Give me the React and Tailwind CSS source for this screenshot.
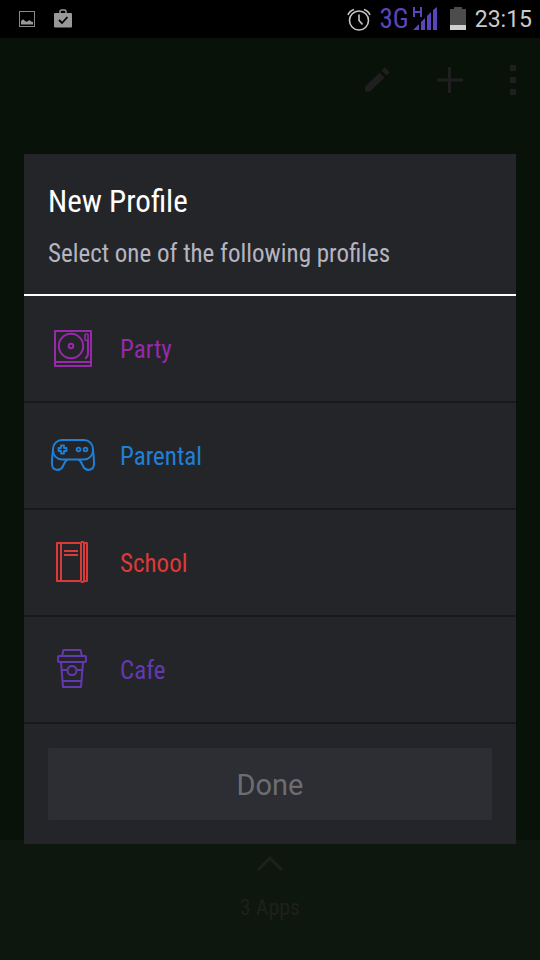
const profiles = [
  { name: 'Party', color: 'text-[#9829ab]', Icon: TurntableIcon },
  { name: 'Parental', color: 'text-[#1e80d8]', Icon: GamepadIcon },
  { name: 'School', color: 'text-[#dc3a38]', Icon: BookIcon },
  { name: 'Cafe', color: 'text-[#6339b0]', Icon: CupIcon },
]

function ProfileIcon({ children }) {
  return (
    <svg
      viewBox="0 0 48 48"
      className="w-12 h-12 shrink-0"
      fill="none"
      stroke="currentColor"
      strokeWidth="2"
      strokeLinejoin="round"
      aria-hidden="true"
    >
      {children}
    </svg>
  )
}

function TurntableIcon() {
  return (
    <ProfileIcon>
      <rect x="7" y="6" width="36" height="35" />
      <path d="M7 37h36" />
      <circle cx="23" cy="21" r="12.2" />
      <circle cx="23" cy="21" r="2.3" />
      <rect x="37" y="9" width="3" height="6.5" rx="1" strokeWidth="1.6" />
      <path d="M40 15v13c0 3-1 4.5-3 5.5" strokeWidth="2" />
    </ProfileIcon>
  )
}

function GamepadIcon() {
  return (
    <ProfileIcon>
      <rect x="5" y="8" width="40" height="19.5" rx="9" />
      <path d="M5 18.5C4.3 23 4 28 4 31.5c0 8 8.500 8 11 2.500 1-2.500 2-5 4.500-6.500" />
      <path d="M45 18.5c.7 4.500 1 9.500 1 13 0 8-8.500 8-11 2.500-1-2.500-2-5-4.500-6.500" />
      <path d="M13 13.5h3v2.500h2.500v3H16v2.500h-3V19h-2.500v-3H13z" strokeWidth="1.8" />
      <circle cx="30.5" cy="17.5" r="1.9" strokeWidth="1.8" />
      <circle cx="37.5" cy="17.5" r="1.9" strokeWidth="1.8" />
    </ProfileIcon>
  )
}

function BookIcon() {
  return (
    <ProfileIcon>
      <path d="M32 4H9v38h23M37 4h2v38h-2M13 4v38" />
      <rect x="33" y="3" width="3" height="40" rx="1" />
      <path d="M16 12h14M16 16h14" />
    </ProfileIcon>
  )
}

function CupIcon() {
  return (
    <ProfileIcon>
      <path d="M14 10l1.500-6h17l1.500 6" />
      <rect x="10" y="10" width="28" height="6" rx="1" />
      <path d="M13 16l2 25h18l2-25M13.500 24H19M29 24h5.500M14.500 35h19" />
      <circle cx="24" cy="24.5" r="4.5" />
    </ProfileIcon>
  )
}

function StatusBar() {
  return (
    <header className="h-[38px] bg-black flex items-center pl-[19px] pr-2 shrink-0">
      <svg viewBox="0 0 16 16" className="w-4 h-4" aria-hidden="true">
        <rect x=".5" y=".5" width="15" height="15" fill="none" stroke="#8a8a8a" />
        <path d="M2 13.500v-3Q3.500 7 5.500 9.500Q7 11.500 9 10Q11 8.500 12 10.500L14 11v2.500z" fill="#9a9a9a" />
      </svg>
      <svg viewBox="0 0 20 20" className="w-5 h-5 ml-[18px]" aria-hidden="true">
        <path d="M7 4V2.500Q7 1 8.500 1h3Q13 1 13 2.500V4" fill="none" stroke="#999" strokeWidth="1.500" />
        <rect x="1" y="4" width="18" height="14.500" rx="1" fill="#999" />
        <path d="M6 11l3 3 5.500-6" fill="none" stroke="#000" strokeWidth="1.800" />
      </svg>

      <div className="ml-auto flex items-center">
        <svg viewBox="0 0 24 24" className="w-6 h-6 mr-2" fill="none" stroke="#c8c8c8" aria-hidden="true">
          <circle cx="12" cy="13.500" r="9.500" strokeWidth="1.600" />
          <path d="M12 7.500v6l3.500 4" strokeWidth="1.600" />
          <path d="M1 8Q2.500 4 7 2.500M23 8Q21.500 4 17 2.500" strokeWidth="1.600" />
        </svg>
        <span className="text-[27px] leading-9 text-[#5b45b8]">3G</span>
        <svg viewBox="0 0 25 24" className="w-[25px] h-6 ml-1 mr-3" fill="#5b45b8" aria-hidden="true">
          <path d="M0 0h2v4h5V0h2v10H7V6H2v4H0z" />
          <path d="M0 23l6-6v6zM8 15l4-4v12H8zM14 9l4-4v18h-4zM20 3l4-3v23h-4z" />
        </svg>
        <svg viewBox="0 0 16 24" className="w-4 h-6 mr-[9px]" aria-hidden="true">
          <path d="M4 0h8v2h4v21H0V2h4z" fill="#4c4c4c" />
          <path d="M0 18h16v5H0z" fill="#cfcfcf" />
        </svg>
        <time className="pt-px font-[Roboto] text-[23px] leading-9 text-[#cacaca]">23:15</time>
      </div>
    </header>
  )
}

function Toolbar() {
  return (
    <div className="flex justify-end items-center h-[84px] text-[#201f20]">
      <button aria-label="Edit" className="w-[72px] flex justify-center">
        <svg viewBox="0 0 26 26" className="w-[26px] h-[26px]" fill="currentColor" aria-hidden="true">
          <path d="M0 20L14.500 5.500l5 5L5.500 24Q3 25 .5 24.500Q-.5 22 0 20zM16.500 3.500L19.500 .5Q22 1.500 24.500 5.500L21.500 8.500z" />
        </svg>
      </button>
      <button aria-label="Add" className="w-[72px] flex justify-center">
        <svg viewBox="0 0 26 26" className="w-[26px] h-[26px]" stroke="currentColor" strokeWidth="3" aria-hidden="true">
          <path d="M12.500 0v26M0 13h26" />
        </svg>
      </button>
      <button aria-label="More options" className="w-[54px] flex justify-center">
        <svg viewBox="0 0 6 30" className="w-[6px] h-[30px]" fill="currentColor" aria-hidden="true">
          <path d="M0 0h6v6H0zM0 12h6v6H0zM0 24h6v6H0z" />
        </svg>
      </button>
    </div>
  )
}

function NewProfileDialog() {
  return (
    <section role="dialog" aria-labelledby="dialog-title" className="w-full bg-[#242529]">
      <div className="px-6 pt-[30px] pb-[22px] border-b-2 border-white">
        <h1 id="dialog-title" className="text-[31px] leading-9 text-white">New Profile</h1>
        <p className="mt-4 text-[25px] leading-9 text-[#b5b5c1]">Select one of the following profiles</p>
      </div>

      <ul>
        {profiles.map(({ name, color, Icon }) => (
          <li key={name} className="border-b-2 border-[#18191c]">
            <button className={`w-full flex items-center gap-6 px-6 pt-[29px] pb-7 text-[25px] leading-9 ${color}`}>
              <Icon />
              <span className="pt-[2px]">{name}</span>
            </button>
          </li>
        ))}
      </ul>

      <div className="p-6">
        <button disabled className="w-full h-[72px] pt-1 rounded-xs bg-[#2d2e33] font-[Roboto] text-[29px] text-[#6c6d71]">
          Done
        </button>
      </div>
    </section>
  )
}

export default function App() {
  return (
    <div className="min-h-screen flex flex-col bg-[#081209] font-['Roboto_Condensed','Liberation_Sans_Narrow',Roboto,sans-serif]">
      <StatusBar />
      <main className="relative flex-1 flex flex-col justify-between">
        <Toolbar />
        <div className="h-[120px] flex flex-col items-center pt-4 bg-[#0d170e] text-[#1e201e]">
          <svg viewBox="0 0 28 16" className="w-7 h-4" fill="none" stroke="currentColor" strokeWidth="3" aria-hidden="true">
            <path d="M2 14L14 2l12 12" />
          </svg>
          <p className="mt-[18px] text-[22px] leading-9">3 Apps</p>
        </div>

        <div className="absolute inset-0 flex items-center px-6">
          <NewProfileDialog />
        </div>
      </main>
    </div>
  )
}
